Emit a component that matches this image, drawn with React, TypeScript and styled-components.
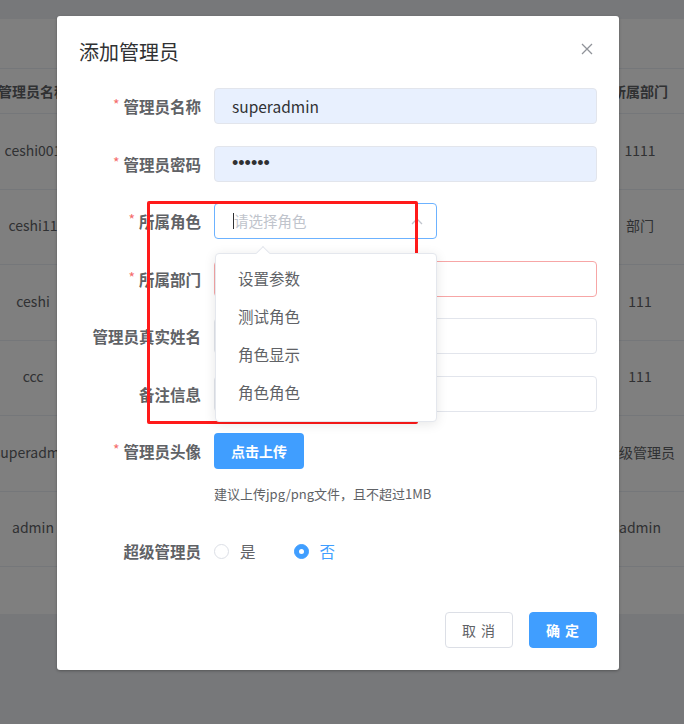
import React from 'react'
import styled, { createGlobalStyle } from 'styled-components'

const GlobalStyle = createGlobalStyle`
  html, body {
    margin: 0;
    padding: 0;
  }
  body {
    font-family: "Noto Sans CJK SC", "Noto Sans", sans-serif;
    color: #606266;
  }
  * {
    box-sizing: border-box;
  }
`

type Row = { name: string; dept: string }

const rows: Row[] = [
  { name: 'ceshi001', dept: '1111' },
  { name: 'ceshi11', dept: '部门' },
  { name: 'ceshi', dept: '111' },
  { name: 'ccc', dept: '111' },
  { name: 'superadmin', dept: '超级管理员' },
  { name: 'admin', dept: 'admin' },
]

const roles = ['设置参数', '测试角色', '角色显示', '角色角色']

const App = () => {
  return (
    <Page>
      <GlobalStyle />

      {/* Admin list behind the dialog */}
      <Card>
        <Toolbar />
        <TableGrid>
          <HeadCell>管理员名称</HeadCell>
          <HeadCell />
          <HeadCell>所属部门</HeadCell>
          {rows.map((r) => (
            <React.Fragment key={r.name}>
              <BodyCell>{r.name}</BodyCell>
              <BodyCell />
              <BodyCell>{r.dept}</BodyCell>
            </React.Fragment>
          ))}
        </TableGrid>
      </Card>

      <Mask />

      <Dialog>
        <DialogHeader>
          <DialogTitle>添加管理员</DialogTitle>
          <CloseButton aria-label="close">
            <svg width="12" height="12" viewBox="0 0 12 12">
              <path d="M1 1L11 11M11 1L1 11" stroke="#909399" strokeWidth="1.3" fill="none" />
            </svg>
          </CloseButton>
        </DialogHeader>

        <Form>
          <FormItem>
            <Label required>管理员名称</Label>
            <Field>
              <TextInput $autofill readOnly defaultValue="superadmin" />
            </Field>
          </FormItem>

          <FormItem>
            <Label required>管理员密码</Label>
            <Field>
              <PasswordInput $autofill readOnly type="password" defaultValue="123456" />
            </Field>
          </FormItem>

          <FormItem>
            <Label required>所属角色</Label>
            <Field>
              <SelectBox>
                <Caret />
                <Placeholder>请选择角色</Placeholder>
                <svg width="12" height="8" viewBox="0 0 12 8">
                  <path d="M1 7L6 2L11 7" stroke="#c0c4cc" strokeWidth="1.3" fill="none" />
                </svg>
                <Dropdown>
                  <DropdownArrow />
                  {roles.map((r) => (
                    <DropdownItem key={r}>{r}</DropdownItem>
                  ))}
                </Dropdown>
              </SelectBox>
            </Field>
          </FormItem>

          <FormItem>
            <Label required>所属部门</Label>
            <Field>
              <TextInput $error readOnly />
            </Field>
          </FormItem>

          <FormItem>
            <Label>管理员真实姓名</Label>
            <Field>
              <TextInput readOnly />
            </Field>
          </FormItem>

          <FormItem>
            <Label>备注信息</Label>
            <Field>
              <TextInput readOnly />
            </Field>
          </FormItem>

          <FormItem $top>
            <Label required>管理员头像</Label>
            <Field>
              <UploadButton>点击上传</UploadButton>
              <Hint>建议上传jpg/png文件，且不超过1MB</Hint>
            </Field>
          </FormItem>

          <FormItem>
            <Label>超级管理员</Label>
            <Field>
              <RadioGroup>
                <RadioOption>
                  <RadioDot />
                  <RadioText>是</RadioText>
                </RadioOption>
                <RadioOption>
                  <RadioDot $checked />
                  <RadioText $checked>否</RadioText>
                </RadioOption>
              </RadioGroup>
            </Field>
          </FormItem>
        </Form>

        <DialogFooter>
          <FooterButton>取 消</FooterButton>
          <FooterButton $primary>确 定</FooterButton>
        </DialogFooter>
      </Dialog>

      <Highlight />
    </Page>
  )
}

export default App

const Page = styled.div`
  position: relative;
  width: 684px;
  height: 724px;
  overflow: hidden;
  background: #eef0f5;
  padding-top: 19px;
`

const Card = styled.div`
  background: #ffffff;
  height: 595px;
`

const Toolbar = styled.div`
  height: 50px;
  border-bottom: 1px solid #ebeef5;
`

const TableGrid = styled.div`
  display: grid;
  grid-template-columns: 66px 1fr 88px;
  grid-template-rows: 45px repeat(6, 75.5px);
`

const HeadCell = styled.div`
  display: flex;
  align-items: center;
  justify-content: center;
  white-space: nowrap;
  font-size: 14px;
  line-height: 20px;
  font-weight: 700;
  color: #606266;
  border-bottom: 1px solid #ebeef5;
`

const BodyCell = styled.div`
  display: flex;
  align-items: center;
  justify-content: center;
  padding-bottom: 3px;
  white-space: nowrap;
  font-size: 14px;
  line-height: 20px;
  color: #606266;
  border-bottom: 1px solid #ebeef5;
`

const Mask = styled.div`
  position: absolute;
  inset: 0;
  background: rgba(0, 0, 0, 0.5);
`

const Dialog = styled.div`
  position: absolute;
  left: 57px;
  top: 16px;
  width: 562px;
  height: 654px;
  display: flex;
  flex-direction: column;
  background: #ffffff;
  border-radius: 3px;
  box-shadow: 0 1px 3px rgba(0, 0, 0, 0.3);
`

const DialogHeader = styled.div`
  display: flex;
  justify-content: space-between;
  align-items: flex-start;
  padding: 24px 26px 0 22px;
`

const DialogTitle = styled.span`
  font-size: 20px;
  line-height: 24px;
  color: #303133;
`

const CloseButton = styled.button`
  border: 0;
  padding: 0;
  margin-top: 3px;
  background: none;
  width: 12px;
  height: 12px;
  display: flex;
`

const Form = styled.div`
  padding: 24px 22px 0 22px;
`

const FormItem = styled.div<{ $top?: boolean }>`
  display: flex;
  align-items: ${(p) => (p.$top ? 'flex-start' : 'center')};
  margin-bottom: ${(p) => (p.$top ? '29px' : '21.5px')};
`

const Label = styled.label<{ required?: boolean }>`
  flex: 0 0 135px;
  height: 36px;
  display: flex;
  align-items: center;
  justify-content: flex-end;
  padding-right: 13px;
  font-size: 15.5px;
  line-height: 20px;
  font-weight: 700;
  color: #606266;
  white-space: nowrap;

  &::before {
    content: ${(p) => (p.required ? "'*'" : 'none')};
    color: #f56c6c;
    font-weight: 400;
    font-size: 14px;
    line-height: 14px;
    margin-right: 4px;
    position: relative;
    top: -2px;
  }
`

const Field = styled.div`
  flex: 1;
  display: flex;
  flex-direction: column;
  align-items: flex-start;
`

const TextInput = styled.input<{ $autofill?: boolean; $error?: boolean }>`
  display: block;
  width: 100%;
  height: 36px;
  padding: 0 17px;
  font-family: inherit;
  font-size: 15.5px;
  color: #303133;
  outline: none;
  border-radius: 4px;
  background: ${(p) => (p.$autofill ? '#e8f0fe' : '#ffffff')};
  border: 1px solid ${(p) => (p.$error ? '#f7a6a6' : '#e2e5ec')};
`

const PasswordInput = styled(TextInput)`
  font-family: "Liberation Sans", Arial, sans-serif;
  font-size: 18px;
  letter-spacing: 0;
`

const SelectBox = styled.div`
  position: relative;
  width: 223px;
  height: 36px;
  display: flex;
  align-items: center;
  padding: 0 13px 0 18px;
  border: 1px solid #6cb2ff;
  border-radius: 4px;
  background: #ffffff;

  & > svg {
    margin-left: auto;
  }
`

const Caret = styled.span`
  width: 1px;
  height: 16px;
  background: #303133;
`

const Placeholder = styled.span`
  font-size: 14.5px;
  line-height: 20px;
  color: #c0c4cc;
`

const Dropdown = styled.ul`
  position: absolute;
  top: 49px;
  left: 0;
  width: 222px;
  margin: 0;
  padding: 5px 0 10px;
  list-style: none;
  background: #ffffff;
  border: 1px solid #e4e7ed;
  border-radius: 4px;
  box-shadow: 0 2px 12px rgba(0, 0, 0, 0.1);
  z-index: 2;
`

const DropdownArrow = styled.span`
  position: absolute;
  top: -6px;
  left: 42px;
  width: 10px;
  height: 10px;
  background: #ffffff;
  border-left: 1px solid #e4e7ed;
  border-top: 1px solid #e4e7ed;
  transform: rotate(45deg);
`

const DropdownItem = styled.li`
  height: 38px;
  line-height: 38px;
  padding: 0 22px;
  font-size: 15.5px;
  color: #606266;
`

const UploadButton = styled.button`
  width: 90px;
  height: 36px;
  border: 0;
  border-radius: 4px;
  background: #409eff;
  color: #ffffff;
  font-family: inherit;
  font-size: 14px;
  font-weight: 700;
`

const Hint = styled.div`
  margin-top: 15px;
  line-height: 20px;
  font-size: 13px;
  color: #606266;
`

const RadioGroup = styled.div`
  display: flex;
  align-items: center;
  gap: 38px;
  height: 36px;
`

const RadioOption = styled.span`
  display: flex;
  align-items: center;
  gap: 11px;
  line-height: 20px;
`

const RadioDot = styled.span<{ $checked?: boolean }>`
  width: 15px;
  height: 15px;
  border-radius: 50%;
  border: 1px solid ${(p) => (p.$checked ? '#409eff' : '#dcdfe6')};
  background: ${(p) => (p.$checked ? '#409eff' : '#ffffff')};
  display: flex;
  align-items: center;
  justify-content: center;

  &::after {
    content: '';
    display: ${(p) => (p.$checked ? 'block' : 'none')};
    width: 5px;
    height: 5px;
    border-radius: 50%;
    background: #ffffff;
  }
`

const RadioText = styled.span<{ $checked?: boolean }>`
  font-size: 15.5px;
  color: ${(p) => (p.$checked ? '#409eff' : '#606266')};
`

const DialogFooter = styled.div`
  margin-top: auto;
  display: flex;
  justify-content: flex-end;
  gap: 16px;
  padding: 0 22px 22px;
`

const FooterButton = styled.button<{ $primary?: boolean }>`
  width: 68px;
  height: 36px;
  border-radius: 4px;
  font-family: inherit;
  font-size: 14px;
  letter-spacing: 1px;
  font-weight: ${(p) => (p.$primary ? 700 : 400)};
  color: ${(p) => (p.$primary ? '#ffffff' : '#606266')};
  background: ${(p) => (p.$primary ? '#409eff' : '#ffffff')};
  border: 1px solid ${(p) => (p.$primary ? '#409eff' : '#dcdfe6')};
`

const Highlight = styled.div`
  position: absolute;
  left: 147px;
  top: 201px;
  width: 271px;
  height: 223px;
  border: 3px solid #ff1a1a;
  border-radius: 2px;
  pointer-events: none;
`
